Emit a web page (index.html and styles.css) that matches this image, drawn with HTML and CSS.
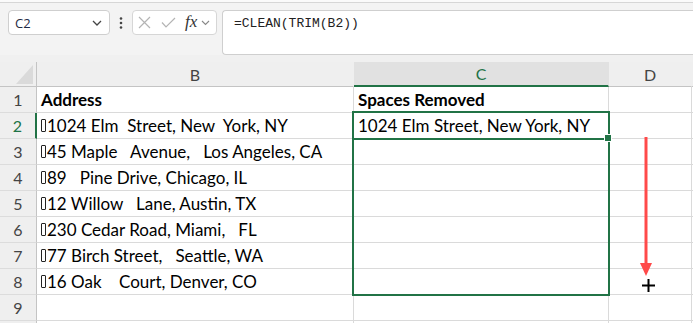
FILE: index.html
```html
<!DOCTYPE html>
<html lang="en">
  <head>
    <meta charset="UTF-8" />
    <title>Spaces Removed - CLEAN(TRIM())</title>
    <link rel="stylesheet" href="styles.css">
  </head>
  <body>
    <div class="top-line"></div>

    <div class="formula-bar">
      <div class="name-box">
        <span class="name-text">C2</span>
        <svg class="chevron" width="10" height="6" viewBox="0 0 10 6">
          <path d="M1 1 L5 5 L9 1" fill="none" stroke="#444" stroke-width="1.3" />
        </svg>
      </div>
      <div class="more">
        <svg width="4" height="12" viewBox="0 0 4 12">
          <circle cx="2" cy="1.5" r="1.3" fill="#444" />
          <circle cx="2" cy="6" r="1.3" fill="#444" />
          <circle cx="2" cy="10.5" r="1.3" fill="#444" />
        </svg>
      </div>
      <div class="fx-box">
        <svg class="cancel" width="13" height="13" viewBox="0 0 13 13">
          <path d="M1 1 L12 12 M12 1 L1 12" stroke="#b4b4b4" stroke-width="1.2" />
        </svg>
        <svg class="enter" width="15" height="11" viewBox="0 0 15 11">
          <path d="M1 5.5 L5 10 L14 1" fill="none" stroke="#b4b4b4" stroke-width="1.2" />
        </svg>
        <span class="fx">fx</span>
        <svg class="chevron small" width="9" height="6" viewBox="0 0 9 6">
          <path d="M1 1 L4.5 4.5 L8 1" fill="none" stroke="#888" stroke-width="1.1" />
        </svg>
      </div>
      <div class="formula-input">=CLEAN(TRIM(B2))</div>
    </div>

    <div class="sheet">
      <div class="grid">
        <div class="hd corner"><span class="tri"></span></div>
        <div class="hd col">B</div>
        <div class="hd col sel">C</div>
        <div class="hd col">D</div>
        <div class="hd col last"></div>

        <div class="hd row">1</div>
        <div class="cell bold">Address</div>
        <div class="cell bold">Spaces Removed</div>
        <div class="cell"></div>
        <div class="cell last"></div>

        <div class="hd row sel">2</div>
        <div class="cell"><span class="np"></span>1024 Elm  Street, New  York, NY</div>
        <div class="cell">1024 Elm Street, New York, NY</div>
        <div class="cell"></div>
        <div class="cell last"></div>

        <div class="hd row">3</div>
        <div class="cell"><span class="np"></span>45 Maple   Avenue,   Los Angeles, CA</div>
        <div class="cell"></div>
        <div class="cell"></div>
        <div class="cell last"></div>

        <div class="hd row">4</div>
        <div class="cell"><span class="np"></span>89   Pine Drive, Chicago, IL</div>
        <div class="cell"></div>
        <div class="cell"></div>
        <div class="cell last"></div>

        <div class="hd row">5</div>
        <div class="cell"><span class="np"></span>12 Willow   Lane, Austin, TX</div>
        <div class="cell"></div>
        <div class="cell"></div>
        <div class="cell last"></div>

        <div class="hd row">6</div>
        <div class="cell"><span class="np"></span>230 Cedar Road, Miami,   FL</div>
        <div class="cell"></div>
        <div class="cell"></div>
        <div class="cell last"></div>

        <div class="hd row">7</div>
        <div class="cell"><span class="np"></span>77 Birch Street,   Seattle, WA</div>
        <div class="cell"></div>
        <div class="cell"></div>
        <div class="cell last"></div>

        <div class="hd row">8</div>
        <div class="cell"><span class="np"></span>16 Oak    Court, Denver, CO</div>
        <div class="cell"></div>
        <div class="cell"></div>
        <div class="cell last"></div>

        <div class="hd row">9</div>
        <div class="cell"></div>
        <div class="cell"></div>
        <div class="cell"></div>
        <div class="cell last"></div>

        <div class="hd row"></div>
        <div class="cell"></div>
        <div class="cell"></div>
        <div class="cell"></div>
        <div class="cell last"></div>
      </div>

      <!-- selection overlays -->
      <div class="range-outline"></div>
      <div class="active-cell"></div>
      <div class="fill-handle"></div>

      <svg class="drag-arrow" width="14" height="140" viewBox="0 0 14 140">
        <line x1="7" y1="0" x2="7" y2="128" stroke="#ff4a4a" stroke-width="3" />
        <path d="M1 126 L13 126 L7 139 Z" fill="#ff4a4a" />
      </svg>
      <svg class="cross-cursor" width="13" height="13" viewBox="0 0 13 13">
        <path d="M6.5 0 V13 M0 6.5 H13" stroke="#000" stroke-width="2" />
      </svg>
    </div>
  </body>
</html>
```

FILE: styles.css
```css
html,
body {
  margin: 0;
  height: 323px;
  overflow: hidden;
}
body {
  background: #f0f0f0;
  font-family: "Open Sans", "Noto Sans", sans-serif;
}
.top-line {
  height: 2px;
  background: #fafafa;
  border-bottom: 1px solid #d6d6d6;
}
.formula-bar {
  display: flex;
  align-items: flex-start;
  padding: 7px 0 0 8px;
  height: 52px;
  box-sizing: border-box;
  margin-bottom: 7px;
  background: #f3f3f3;
}
.name-box {
  width: 102px;
  height: 25px;
  box-sizing: border-box;
  background: white;
  border: 1px solid #cfcfcf;
  border-radius: 4px;
  display: flex;
  align-items: center;
  justify-content: space-between;
  padding: 0 7px 0 6px;
}
.name-text {
  font-size: 13px;
  color: #1f2a44;
}
.more {
  width: 22px;
  height: 25px;
  display: flex;
  align-items: center;
  justify-content: center;
}
.fx-box {
  width: 85px;
  height: 25px;
  box-sizing: border-box;
  background: white;
  border: 1px solid #d6d6d6;
  border-radius: 4px;
  display: flex;
  align-items: center;
  padding: 0 0 0 5px;
}
.cancel {
  margin-right: 10px;
}
.enter {
  margin-right: 9px;
}
.fx {
  font-family: "Liberation Serif", serif;
  font-style: italic;
  font-size: 17px;
  color: #333;
  margin-right: 4px;
  line-height: 1;
  margin-top: -2px;
}
.formula-input {
  flex: 1;
  margin-left: 5px;
  height: 45px;
  box-sizing: border-box;
  background: white;
  border: 1px solid #cfcfcf;
  border-right: none;
  border-radius: 4px 0 0 4px;
  padding: 5px 0 0 11px;
  font-family: "Liberation Mono", monospace;
  font-size: 13px;
  color: #222;
}

/* sheet */
.sheet {
  position: relative;
  background: white;
}
.grid {
  display: grid;
  grid-template-columns: 37px 317px 255px 83px 1fr;
  grid-template-rows: 25px repeat(10, 26px);
}
.grid > div {
  box-sizing: border-box;
  border-right: 1px solid #dadada;
  border-bottom: 1px solid #dadada;
  white-space: pre;
  overflow: hidden;
}
.hd {
  background: #efefef;
  color: #444;
  font-family: "Lato", sans-serif;
  font-size: 16px;
  display: flex;
  align-items: center;
  justify-content: center;
}
.hd.col {
  border-bottom-color: #c4c4c4;
  border-right-color: #efefef;
}
.hd.col.sel {
  background: #e1e1e1;
  color: #217346;
  border-bottom: 2px solid #217346;
  border-right-color: #e1e1e1;
}
.hd.row {
  border-right-color: #c4c4c4;
  border-bottom-color: #dcdcdc;
}
.hd.row.sel {
  color: #217346;
  border-right: 2px solid #217346;
}
.corner {
  position: relative;
  border-bottom-color: #c4c4c4 !important;
  border-right-color: #c4c4c4 !important;
}
.tri {
  position: absolute;
  right: 3px;
  bottom: 2px;
  width: 0;
  height: 0;
  border-left: 17px solid transparent;
  border-bottom: 19px solid #dadada;
}
.cell {
  background: white;
  font-family: "Lato", sans-serif;
  font-size: 17px;
  color: #000;
  padding-left: 4px;
  display: flex;
  align-items: center;
}
.cell.bold {
  font-weight: bold;
}
.cell.last {
  border-right: none;
}
.np {
  display: inline-block;
  width: 3px;
  height: 11px;
  border: 1px solid #222;
  border-radius: 1px;
  margin-right: 1px;
}

/* overlays */
.range-outline {
  position: absolute;
  left: 352px;
  top: 49px;
  width: 258px;
  height: 185px;
  box-sizing: border-box;
  border: 2px solid #217346;
}
.active-cell {
  position: absolute;
  left: 352px;
  top: 49px;
  width: 258px;
  height: 29px;
  box-sizing: border-box;
  border: 2px solid #217346;
}
.fill-handle {
  position: absolute;
  left: 605px;
  top: 73px;
  width: 6px;
  height: 6px;
  background: #217346;
  border: 1px solid white;
  box-sizing: content-box;
  margin: -1px 0 0 -1px;
}
.drag-arrow {
  position: absolute;
  left: 639px;
  top: 75px;
}
.cross-cursor {
  position: absolute;
  left: 642px;
  top: 217px;
}
```
